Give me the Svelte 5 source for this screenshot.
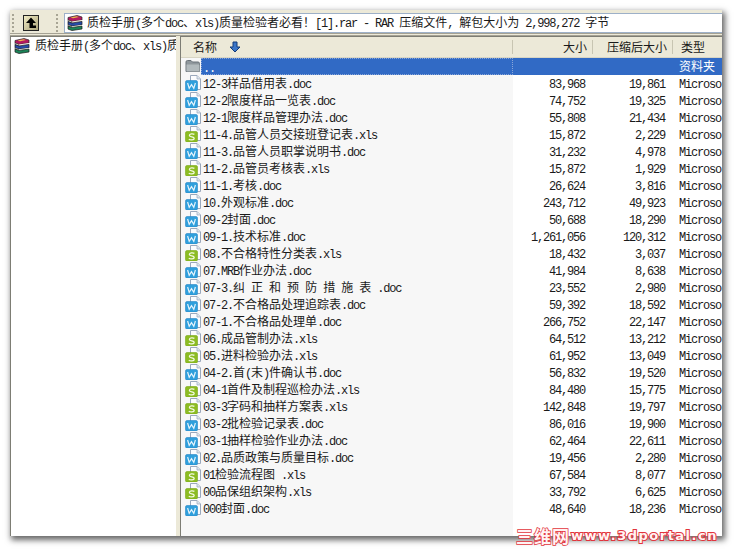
<script>
  const raw = `12-3样品借用表.doc|83,968|19,861
12-2限度样品一览表.doc|74,752|19,325
12-1限度样品管理办法.doc|55,808|21,434
11-4.品管人员交接班登记表.xls|15,872|2,229
11-3.品管人员职掌说明书.doc|31,232|4,978
11-2.品管员考核表.xls|15,872|1,929
11-1.考核.doc|26,624|3,816
10.外观标准.doc|243,712|49,923
09-2封面.doc|50,688|18,290
09-1.技术标准.doc|1,261,056|120,312
08.不合格特性分类表.xls|18,432|3,037
07.MRB作业办法.doc|41,984|8,638
07-3.纠 正 和 预 防 措 施 表 .doc|23,552|2,980
07-2.不合格品处理追踪表.doc|59,392|18,592
07-1.不合格品处理单.doc|266,752|22,147
06.成品管制办法.xls|64,512|13,212
05.进料检验办法.xls|61,952|13,049
04-2.首(末)件确认书.doc|56,832|19,520
04-1首件及制程巡检办法.xls|84,480|15,775
03-3字码和抽样方案表.xls|142,848|19,797
03-2批检验记录表.doc|86,016|19,900
03-1抽样检验作业办法.doc|62,464|22,611
02.品质政策与质量目标.doc|19,456|2,280
01检验流程图 .xls|67,584|8,077
00品保组织架构.xls|33,792|6,625
000封面.doc|48,640|18,236`;
  const files = raw.split('\n').map((l) => {
    const [name, size, packed] = l.split('|');
    return { name, size, packed, kind: name.endsWith('.xls') ? 'xls' : 'doc' };
  });
  const title = '质检手册(多个doc、xls)质量检验者必看！[1].rar - RAR 压缩文件, 解包大小为 2,998,272 字节';
  const tree = '质检手册(多个doc、xls)质';
  const parts = (s) =>
    s.split(/([\u0000-\u00ff]+)/).filter(Boolean).map((t) => ({ t, latin: /^[\u0000-\u00ff]/.test(t) }));
</script>

{#snippet txt(s)}
  {#each parts(s) as p}<span class={p.latin ? 'latin' : 'cjk'}>{p.t}</span>{/each}
{/snippet}

{#snippet rar()}
  <svg class="ico" viewBox="0 0 16 16">
    <path d="M1 2.5 L10 .5 L15 2 V5 L5 6.5 L1 5 Z" fill="#b3195f" stroke="#2a2a2a" stroke-width=".7" />
    <path d="M3.5 2.4 L9.5 1.2 L12 2 L6 3.2 Z" fill="#e9bf4a" />
    <path d="M1 5 Q2.6 5.6 5 6.5 V8 L1 6.6 Z" fill="#f6f2e6" stroke="#2a2a2a" stroke-width=".5" />
    <path d="M5 6.5 L15 5 V6 L5 7.6 Z" fill="#f6f2e6" />
    <path d="M1 6.6 L5 8 L15 6.4 V9.8 L5 11.2 L1 9.8 Z" fill="#274aa6" stroke="#1a1a1a" stroke-width=".7" />
    <path d="M1 9.8 L5 11.2 V12.4 L1 11.1 Z" fill="#f6f2e6" stroke="#2a2a2a" stroke-width=".5" />
    <path d="M5 11.2 L15 9.9 V10.9 L5 12.2 Z" fill="#f6f2e6" />
    <path d="M1 11.1 L5 12.4 L15 11.1 V14 L5 15.5 L1 14.1 Z" fill="#1b8458" stroke="#1a1a1a" stroke-width=".7" />
  </svg>
{/snippet}

{#snippet doc()}
  <svg class="ico" viewBox="0 0 16 16">
    <path d="M5.5 .5 H12 L15.5 4 V14.5 H5.5 Z" fill="#fbfcfe" stroke="#9aa8bc" />
    <path d="M12 .5 V4 H15.5" fill="#dfe6ee" stroke="#9aa8bc" stroke-width=".7" />
    <rect x=".5" y="5.5" width="12" height="10.5" rx="1.5" fill="#2f9fdc" stroke="#2a86c6" stroke-width=".6" />
    <path d="M2.6 8 L4.2 13.4 L6.5 9.6 L8.8 13.4 L10.4 8" fill="none" stroke="#e6f4fc" stroke-width="1.2" />
  </svg>
{/snippet}

{#snippet xls()}
  <svg class="ico" viewBox="0 0 16 16">
    <path d="M5.5 .5 H12 L15.5 4 V14.5 H5.5 Z" fill="#fbfcfe" stroke="#9aa8bc" />
    <path d="M12 .5 V4 H15.5" fill="#dfe6ee" stroke="#9aa8bc" stroke-width=".7" />
    <rect x=".5" y="5.5" width="12" height="10.5" rx="1.5" fill="#8cbc22" stroke="#7aa818" stroke-width=".6" />
    <path d="M9.4 8.4 C8 7.5 4.4 7.6 4.4 9.4 C4.4 11.3 9.2 10.6 9.2 12.4 C9.2 14.2 5 14.1 3.8 13.2" fill="none" stroke="#f4fae2" stroke-width="1.3" />
  </svg>
{/snippet}

<div class="window">
  <div class="toolbar">
    <span class="grip"></span>
    <span class="upbtn">
      <svg viewBox="0 0 16 16" width="16" height="16">
        <defs>
          <linearGradient id="upbg" x1="0" y1="0" x2="1" y2="1">
            <stop offset="0" stop-color="#f4efc8" />
            <stop offset="1" stop-color="#a8a078" />
          </linearGradient>
        </defs>
        <rect x=".5" y=".5" width="15" height="15" fill="url(#upbg)" stroke="#222" />
        <path d="M8 2.5 L13 8 H10 V10.5 H13 V13 H6.5 V8 H3 Z" fill="#000" />
      </svg>
    </span>
    <span class="grip second"></span>
    <div class="address">
      {@render rar()}
      <span class="addr-text">{@render txt(title)}</span>
    </div>
  </div>
  <div class="rule"></div>
  <div class="panes">
    <aside class="tree">
      <div class="tree-item">
        {@render rar()}
        <span class="tree-text">{@render txt(tree)}</span>
      </div>
    </aside>
    <div class="split"></div>
    <section class="list">
      <div class="head">
        <div class="hcell name">
          <span class="hname">名称</span>
          <svg class="sort" viewBox="0 0 12 12" width="12" height="12">
            <path d="M4 1 H8 V6 H11 L6 11 L1 6 H4 Z" fill="#3a76c8" stroke="#123a78" stroke-width="1" />
          </svg>
        </div>
        <div class="hcell num"><span class="cjk">大小</span></div>
        <div class="hcell num"><span class="cjk">压缩后大小</span></div>
        <div class="hcell type"><span class="cjk">类型</span></div>
      </div>
      <div class="body">
        <div class="row parent">
          <div class="cell name">
            <svg class="ico" viewBox="0 0 16 16">
              <path d="M1 4 Q1 2.5 2.5 2.5 H6 L7.5 4 H13 Q14.5 4 14.5 5.5 V13.5 H1 Z" fill="#8f979c" stroke="#6a7278" />
              <path d="M1.5 6.5 H14.5 V13.5 H1.5 Z" fill="#b2babd" />
            </svg>
            <span class="sel"><span class="latin">..</span></span>
          </div>
          <div class="cell bar"></div>
          <div class="cell bar"></div>
          <div class="cell bar typec"><span class="cjk">资料夹</span></div>
        </div>
        {#each files as f}
          <div class="row">
            <div class="cell name">
              {#if f.kind === 'xls'}{@render xls()}{:else}{@render doc()}{/if}
              <span class="fname">{@render txt(f.name)}</span>
            </div>
            <div class="cell numc"><span class="latin">{f.size}</span></div>
            <div class="cell numc"><span class="latin">{f.packed}</span></div>
            <div class="cell typec"><span class="latin">Microso</span></div>
          </div>
        {/each}
      </div>
    </section>
  </div>
</div>
<div class="mark"><span class="mark-cn">三维网</span><span class="mark-en">www.3dportal.cn</span></div>

<style>
  :global(body) {
    margin: 0;
    background: #fff;
  }
  .window {
    position: absolute;
    left: 10px;
    top: 10px;
    width: 712px;
    height: 526px;
    background: #ece9d8;
    box-shadow: 2px 3px 6px 1px #666;
    display: flex;
    flex-direction: column;
    overflow: hidden;
  }
  .cjk {
    font: 12px/17px "Noto Sans CJK SC", sans-serif;
    color: #1a1a1a;
    white-space: pre;
  }
  .latin {
    font: 12px/17px "Liberation Mono", monospace;
    letter-spacing: -1.2px;
    color: #1a1a1a;
    white-space: pre;
  }
  .row .cjk,
  .row .latin {
    line-height: 15px;
  }
  .toolbar {
    height: 23px;
    box-sizing: border-box;
    display: flex;
    align-items: center;
    padding-top: 3px;
  }
  .grip {
    width: 2px;
    height: 18px;
    margin-left: 2px;
    background-image: repeating-linear-gradient(#a8a594 0 2px, transparent 2px 4px);
  }
  .grip.second {
    margin-left: 17px;
  }
  .upbtn {
    margin-left: 9px;
    width: 16px;
    height: 16px;
    display: block;
  }
  .upbtn svg {
    display: block;
  }
  .address {
    margin-left: 6px;
    flex: 1;
    height: 18px;
    background: #fff;
    border: 1px solid #9db0c8;
    border-right: 0;
    display: flex;
    align-items: center;
    padding-left: 2px;
    overflow: hidden;
  }
  .addr-text {
    margin-left: 4px;
    white-space: nowrap;
  }
  .ico {
    width: 16px;
    height: 16px;
    flex: none;
    display: block;
  }
  .rule {
    height: 3px;
    box-sizing: border-box;
    border-top: 1px solid #a5a294;
    border-bottom: 1px solid #a5a294;
  }
  .panes {
    flex: 1;
    display: flex;
    min-height: 0;
  }
  .tree {
    width: 165px;
    background: #fff;
    border-left: 1px solid #7d7d74;
    border-top: 1px solid #7d7d74;
    overflow: hidden;
  }
  .tree-item {
    display: flex;
    align-items: center;
    height: 17px;
    padding-left: 3px;
  }
  .tree-text {
    margin-left: 5px;
    white-space: nowrap;
  }
  .split {
    width: 4px;
    flex: none;
  }
  .list {
    flex: 1;
    min-width: 0;
    display: flex;
    flex-direction: column;
    border-left: 1px solid #7d7d74;
    border-top: 1px solid #7d7d74;
  }
  .head,
  .row {
    display: grid;
    grid-template-columns: 332px 80px 80px 49px;
  }
  .head {
    height: 21px;
    box-sizing: border-box;
    align-items: center;
    background: #ece9d8;
    border-bottom: 1px solid #d8d5c4;
  }
  .hcell {
    height: 14px;
    display: flex;
    align-items: center;
    border-right: 1px solid #c8c5b2;
    box-sizing: border-box;
  }
  .hcell .cjk,
  .hname {
    font: 12px/14px "Noto Sans CJK SC", sans-serif;
    color: #1a1a1a;
  }
  .hcell.name {
    padding-left: 12px;
  }
  .sort {
    margin-left: 12px;
  }
  .hcell.num {
    justify-content: flex-end;
    padding-right: 5px;
  }
  .hcell.type {
    padding-left: 8px;
    border-right: 0;
  }
  .body {
    flex: 1;
    background: linear-gradient(90deg, #f7f7f7 332px, #fff 332px);
    overflow: hidden;
  }
  .row {
    height: 17px;
  }
  .cell {
    min-width: 0;
    overflow: hidden;
    white-space: nowrap;
    height: 17px;
  }
  .cell.name {
    display: flex;
    align-items: flex-start;
    padding-left: 4px;
  }
  .fname {
    margin-left: 2px;
    line-height: 15px;
  }
  .sel {
    flex: 1;
    height: 17px;
    padding-left: 2px;
    background: #316ac5;
    outline: 1px dotted #8aa6d8;
    outline-offset: -1px;
  }
  .sel .latin,
  .typec .cjk {
    color: #fff;
  }
  .bar {
    background: #316ac5;
  }
  .numc {
    text-align: right;
    padding-right: 8px;
    line-height: 15px;
  }
  .typec {
    padding-left: 6px;
    line-height: 15px;
  }
  .mark {
    position: absolute;
    left: 516px;
    top: 527px;
    display: flex;
    align-items: center;
    height: 17px;
    white-space: nowrap;
    color: #fff3f3;
    paint-order: stroke fill;
  }
  .mark-cn {
    font: bold 17px/17px "Noto Sans CJK SC", sans-serif;
    letter-spacing: 1px;
    -webkit-text-stroke: 1.5px #e2343c;
  }
  .mark-en {
    font: bold 13px/17px "DejaVu Sans", sans-serif;
    letter-spacing: 1.5px;
    margin-left: 1px;
    -webkit-text-stroke: 2px #e2343c;
  }
</style>
